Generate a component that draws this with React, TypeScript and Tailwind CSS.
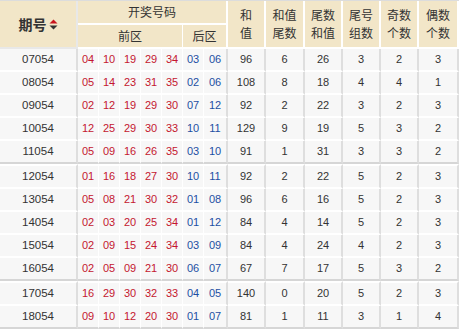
const rows: [string, string[], string[], (string | number)[]][] = [
  ["07054", ["04", "10", "19", "29", "34"], ["03", "06"], [96, 6, 26, 3, 2, 3]],
  ["08054", ["05", "14", "23", "31", "35"], ["02", "06"], [108, 8, 18, 4, 4, 1]],
  ["09054", ["02", "12", "19", "29", "30"], ["07", "12"], [92, 2, 22, 3, 2, 3]],
  ["10054", ["12", "25", "29", "30", "33"], ["10", "11"], [129, 9, 19, 5, 3, 2]],
  ["11054", ["05", "09", "16", "26", "35"], ["03", "10"], [91, 1, 31, 3, 3, 2]],
  ["12054", ["01", "16", "18", "27", "30"], ["10", "11"], [92, 2, 22, 5, 2, 3]],
  ["13054", ["05", "08", "21", "30", "32"], ["01", "08"], [96, 6, 16, 5, 2, 3]],
  ["14054", ["02", "03", "20", "25", "34"], ["01", "12"], [84, 4, 14, 5, 2, 3]],
  ["15054", ["02", "09", "15", "24", "34"], ["03", "09"], [84, 4, 24, 4, 2, 3]],
  ["16054", ["02", "05", "09", "21", "30"], ["06", "07"], [67, 7, 17, 5, 3, 2]],
  ["17054", ["16", "29", "30", "32", "33"], ["04", "05"], [140, 0, 20, 5, 2, 3]],
  ["18054", ["09", "10", "12", "20", "30"], ["01", "07"], [81, 1, 11, 3, 1, 4]],
];

// rows closing a group get a grey rule, rows opening one get extra white
const groupEnd = [4, 9, 11];
const groupStart = [5, 10];

const statHeads = [
  ["和", "值"],
  ["和值", "尾数"],
  ["尾数", "和值"],
  ["尾号", "组数"],
  ["奇数", "个数"],
  ["偶数", "个数"],
];

const SortIcon = () => (
  <svg width="9" height="11" viewBox="0 0 9 11" className="inline-block ml-[2px] -mt-[2px] align-middle">
    <path d="M4.5 0.5 L8.5 4.5 L0.5 4.5 Z" fill="#c8141e" />
    <path d="M0.5 6.5 L8.5 6.5 L4.5 10.5 Z" fill="#333333" />
  </svg>
);

export default function App() {
  return (
    <div className="w-[459px] h-[333px] bg-white border-t border-[#dcdcdc] overflow-hidden">
      <table
        className="table-fixed border-separate border-spacing-0 w-[459px] text-[#333]"
        style={{ fontFamily: '"Liberation Sans", "Noto Sans CJK SC", sans-serif' }}
      >
        <colgroup>
          <col className="w-[78px]" />
          <col className="w-[21px]" />
          <col className="w-[21px]" />
          <col className="w-[21px]" />
          <col className="w-[21px]" />
          <col className="w-[21px]" />
          <col className="w-[21px]" />
          <col className="w-[24px]" />
          <col className="w-[38px]" />
          <col className="w-[39px]" />
          <col className="w-[38px]" />
          <col className="w-[38px]" />
          <col className="w-[38px]" />
          <col className="w-[40px]" />
        </colgroup>
        <thead className="bg-[#f2e6c8]" style={{ fontFamily: '"Noto Sans CJK SC", sans-serif' }}>
          <tr className="h-[24px]">
            <th rowSpan={2} className="p-0 font-bold text-[14px] border-r-2 border-b-2 border-[#e8e8e8]">
              期号
              <SortIcon />
            </th>
            <th colSpan={7} className="p-0 font-normal text-[12px] border-r-2 border-b-2 border-white">
              开奖号码
            </th>
            {statHeads.map((h, i) => (
              <th key={i} rowSpan={2} className="p-0 font-normal text-[12px] border-r-2 border-b-2 border-white">
                <div className="leading-[18px]">{h[0]}</div>
                <div className="leading-[18px]">{h[1]}</div>
              </th>
            ))}
          </tr>
          <tr className="h-[24px]">
            <th colSpan={5} className="p-0 font-normal text-[12px] border-r border-b-2 border-white">
              前区
            </th>
            <th colSpan={2} className="p-0 font-normal text-[12px] border-r-2 border-b-2 border-white">
              后区
            </th>
          </tr>
        </thead>
        <tbody className="bg-[#f7f7f7] text-[11px]">
          {rows.map(([issue, front, back, stats], r) => {
            const end = groupEnd.includes(r);
            const start = groupStart.includes(r);
            const bb = end ? "border-b-2 border-b-[#d6d6d6]" : "border-b-2 border-b-white";
            const bt = start ? "border-t-2 border-t-white" : "";
            return (
              <tr key={issue} className={start ? "h-[25px]" : "h-[23px]"}>
                <td className={`p-0 text-center text-[11.5px] border-r-2 border-r-[#dedede] ${bb} ${bt}`}>{issue}</td>
                {front.map((n, i) => (
                  <td key={"f" + i} className={`p-0 text-center text-[#c4162f] border-r border-r-white ${bb} ${bt}`}>
                    {n}
                  </td>
                ))}
                {back.map((n, i) => (
                  <td
                    key={"b" + i}
                    className={`p-0 text-center text-[#1d4fa3] ${
                      i === 1 ? "border-r-2 border-r-[#dedede]" : "border-r border-r-white"
                    } ${bb} ${bt}`}
                  >
                    {n}
                  </td>
                ))}
                {stats.map((s, i) => (
                  <td key={"s" + i} className={`p-0 text-center border-r-2 border-r-[#dedede] ${bb} ${bt}`}>
                    {s}
                  </td>
                ))}
              </tr>
            );
          })}
        </tbody>
      </table>
    </div>
  );
}
